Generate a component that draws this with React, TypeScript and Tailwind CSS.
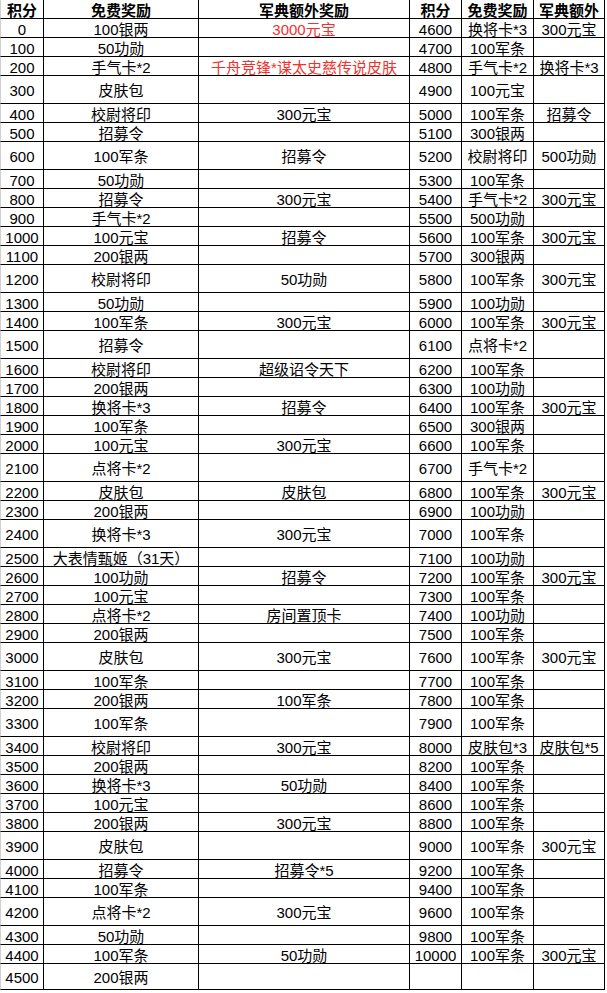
import React from 'react'

type Row = {
  a: string
  b: string
  c?: string
  d?: string
  e?: string
  f?: string
  tall?: boolean
  red?: boolean
}

const rows: Row[] = [
  { a: '0', b: '100银两', c: '3000元宝', red: true, d: '4600', e: '换将卡*3', f: '300元宝' },
  { a: '100', b: '50功勋', d: '4700', e: '100军条' },
  { a: '200', b: '手气卡*2', c: '千舟竞锋*谋太史慈传说皮肤', red: true, d: '4800', e: '手气卡*2', f: '换将卡*3' },
  { a: '300', b: '皮肤包', d: '4900', e: '100元宝', tall: true },
  { a: '400', b: '校尉将印', c: '300元宝', d: '5000', e: '100军条', f: '招募令' },
  { a: '500', b: '招募令', d: '5100', e: '300银两' },
  { a: '600', b: '100军条', c: '招募令', d: '5200', e: '校尉将印', f: '500功勋', tall: true },
  { a: '700', b: '50功勋', d: '5300', e: '100军条' },
  { a: '800', b: '招募令', c: '300元宝', d: '5400', e: '手气卡*2', f: '300元宝' },
  { a: '900', b: '手气卡*2', d: '5500', e: '500功勋' },
  { a: '1000', b: '100元宝', c: '招募令', d: '5600', e: '100军条', f: '300元宝' },
  { a: '1100', b: '200银两', d: '5700', e: '300银两' },
  { a: '1200', b: '校尉将印', c: '50功勋', d: '5800', e: '100军条', f: '300元宝', tall: true },
  { a: '1300', b: '50功勋', d: '5900', e: '100功勋' },
  { a: '1400', b: '100军条', c: '300元宝', d: '6000', e: '100军条', f: '300元宝' },
  { a: '1500', b: '招募令', d: '6100', e: '点将卡*2', tall: true },
  { a: '1600', b: '校尉将印', c: '超级诏令天下', d: '6200', e: '100军条' },
  { a: '1700', b: '200银两', d: '6300', e: '100功勋' },
  { a: '1800', b: '换将卡*3', c: '招募令', d: '6400', e: '100军条', f: '300元宝' },
  { a: '1900', b: '100军条', d: '6500', e: '300银两' },
  { a: '2000', b: '100元宝', c: '300元宝', d: '6600', e: '100军条' },
  { a: '2100', b: '点将卡*2', d: '6700', e: '手气卡*2', tall: true },
  { a: '2200', b: '皮肤包', c: '皮肤包', d: '6800', e: '100军条', f: '300元宝' },
  { a: '2300', b: '200银两', d: '6900', e: '100功勋' },
  { a: '2400', b: '换将卡*3', c: '300元宝', d: '7000', e: '100军条', tall: true },
  { a: '2500', b: '大表情甄姬（31天）', d: '7100', e: '100功勋' },
  { a: '2600', b: '100功勋', c: '招募令', d: '7200', e: '100军条', f: '300元宝' },
  { a: '2700', b: '100元宝', d: '7300', e: '100军条' },
  { a: '2800', b: '点将卡*2', c: '房间置顶卡', d: '7400', e: '100功勋' },
  { a: '2900', b: '200银两', d: '7500', e: '100军条' },
  { a: '3000', b: '皮肤包', c: '300元宝', d: '7600', e: '100军条', f: '300元宝', tall: true },
  { a: '3100', b: '100军条', d: '7700', e: '100军条' },
  { a: '3200', b: '200银两', c: '100军条', d: '7800', e: '100军条' },
  { a: '3300', b: '100军条', d: '7900', e: '100军条', tall: true },
  { a: '3400', b: '校尉将印', c: '300元宝', d: '8000', e: '皮肤包*3', f: '皮肤包*5' },
  { a: '3500', b: '200银两', d: '8200', e: '100军条' },
  { a: '3600', b: '换将卡*3', c: '50功勋', d: '8400', e: '100军条' },
  { a: '3700', b: '100元宝', d: '8600', e: '100军条' },
  { a: '3800', b: '200银两', c: '300元宝', d: '8800', e: '100军条' },
  { a: '3900', b: '皮肤包', d: '9000', e: '100军条', f: '300元宝', tall: true },
  { a: '4000', b: '招募令', c: '招募令*5', d: '9200', e: '100军条' },
  { a: '4100', b: '100军条', d: '9400', e: '100军条' },
  { a: '4200', b: '点将卡*2', c: '300元宝', d: '9600', e: '100军条', tall: true },
  { a: '4300', b: '50功勋', d: '9800', e: '100军条' },
  { a: '4400', b: '100军条', c: '50功勋', d: '10000', e: '100军条', f: '300元宝' },
  { a: '4500', b: '200银两', tall: true },
]

function Cell({ children, tall, last, first, red, bold }: { children?: React.ReactNode; tall?: boolean; last?: boolean; first?: boolean; red?: boolean; bold?: boolean }) {
  return (
    <div
      className={[
        'flex items-center justify-center whitespace-nowrap border-b border-r border-black pt-[2px]',
        last ? 'h-[26px]' : tall ? 'h-[28px]' : 'h-[19px]',
        first ? 'border-l border-l-[#d0d0d0]' : '',
        red ? 'text-[#f5302c]' : 'text-black',
        bold ? 'font-bold' : '',
      ].join(' ')}
    >
      {children}
    </div>
  )
}

export default function App() {
  return (
    <div className="w-[607px] min-h-[993px] bg-white font-['Liberation_Sans','Noto_Sans_CJK_SC',sans-serif] text-[15px] leading-none">
      <div className="grid w-[605px] grid-cols-[44px_155px_211px_52px_72px_71px]">
        <Cell first bold>积分</Cell>
        <Cell bold>免费奖励</Cell>
        <Cell bold>军典额外奖励</Cell>
        <Cell bold>积分</Cell>
        <Cell bold>免费奖励</Cell>
        <Cell bold>军典额外</Cell>
        {rows.map((row, i) => {
          const last = i === rows.length - 1
          return (
            <React.Fragment key={row.a}>
              <Cell first tall={row.tall} last={last}>{row.a}</Cell>
              <Cell tall={row.tall} last={last}>{row.b}</Cell>
              <Cell tall={row.tall} last={last} red={row.red}>{row.c}</Cell>
              <Cell tall={row.tall} last={last}>{row.d}</Cell>
              <Cell tall={row.tall} last={last}>{row.e}</Cell>
              <Cell tall={row.tall} last={last}>{row.f}</Cell>
            </React.Fragment>
          )
        })}
      </div>
    </div>
  )
}
